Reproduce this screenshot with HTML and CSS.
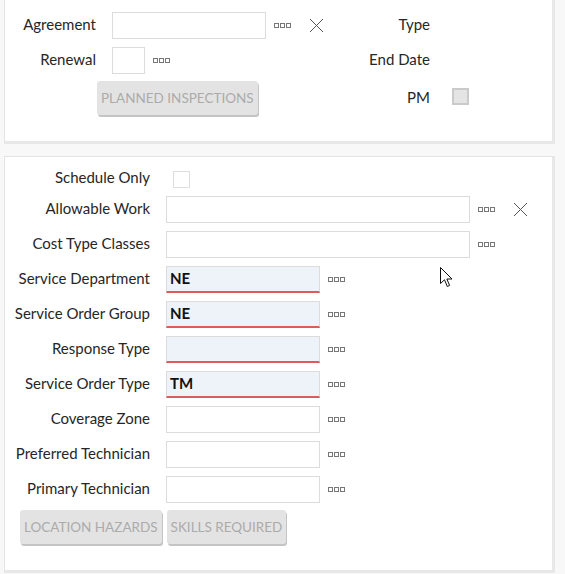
FILE: index.html
```html
<!DOCTYPE html>
<html>
<head>
<meta charset="utf-8">
<link rel="stylesheet" href="styles.css">
</head>
<body>
<div class="page">
  <section class="panel panel-top">
    <div class="grid-top">
      <div class="lbl">Agreement</div>
      <div class="field">
        <div class="input w154"></div>
        <svg class="dots" width="17" height="5" viewBox="0 0 17 5"><rect x="0.5" y="0.5" width="4" height="4"/><rect x="6.5" y="0.5" width="4" height="4"/><rect x="12.5" y="0.5" width="4" height="4"/></svg>
        <svg class="clear" width="15" height="15" viewBox="0 0 15 15"><path d="M1 1L14 14M14 1L1 14"/></svg>
      </div>
      <div class="lbl2">Type</div>
      <div class="val2"></div>

      <div class="lbl">Renewal</div>
      <div class="field">
        <div class="input w33"></div>
        <svg class="dots" width="17" height="5" viewBox="0 0 17 5"><rect x="0.5" y="0.5" width="4" height="4"/><rect x="6.5" y="0.5" width="4" height="4"/><rect x="12.5" y="0.5" width="4" height="4"/></svg>
      </div>
      <div class="lbl2">End Date</div>
      <div class="val2"></div>

      <div class="btn-cell"><button class="btn">PLANNED INSPECTIONS</button></div>
      <div class="lbl2 pm">PM</div>
      <div class="val2 pm-val"><span class="check disabled"></span></div>
    </div>
  </section>

  <section class="panel panel-main">
    <div class="grid-main">
      <div class="lbl first">Schedule Only</div>
      <div class="field check-field"><span class="check"></span></div>

      <div class="lbl">Allowable Work</div>
      <div class="field">
        <div class="input w304"></div>
        <svg class="dots" width="17" height="5" viewBox="0 0 17 5"><rect x="0.5" y="0.5" width="4" height="4"/><rect x="6.5" y="0.5" width="4" height="4"/><rect x="12.5" y="0.5" width="4" height="4"/></svg>
        <svg class="clear" width="15" height="15" viewBox="0 0 15 15"><path d="M1 1L14 14M14 1L1 14"/></svg>
      </div>

      <div class="lbl">Cost Type Classes</div>
      <div class="field">
        <div class="input w304"></div>
        <svg class="dots" width="17" height="5" viewBox="0 0 17 5"><rect x="0.5" y="0.5" width="4" height="4"/><rect x="6.5" y="0.5" width="4" height="4"/><rect x="12.5" y="0.5" width="4" height="4"/></svg>
      </div>

      <div class="lbl">Service Department</div>
      <div class="field">
        <div class="input w154 required">NE</div>
        <svg class="dots" width="17" height="5" viewBox="0 0 17 5"><rect x="0.5" y="0.5" width="4" height="4"/><rect x="6.5" y="0.5" width="4" height="4"/><rect x="12.5" y="0.5" width="4" height="4"/></svg>
      </div>

      <div class="lbl">Service Order Group</div>
      <div class="field">
        <div class="input w154 required">NE</div>
        <svg class="dots" width="17" height="5" viewBox="0 0 17 5"><rect x="0.5" y="0.5" width="4" height="4"/><rect x="6.5" y="0.5" width="4" height="4"/><rect x="12.5" y="0.5" width="4" height="4"/></svg>
      </div>

      <div class="lbl">Response Type</div>
      <div class="field">
        <div class="input w154 required"></div>
        <svg class="dots" width="17" height="5" viewBox="0 0 17 5"><rect x="0.5" y="0.5" width="4" height="4"/><rect x="6.5" y="0.5" width="4" height="4"/><rect x="12.5" y="0.5" width="4" height="4"/></svg>
      </div>

      <div class="lbl">Service Order Type</div>
      <div class="field">
        <div class="input w154 required">TM</div>
        <svg class="dots" width="17" height="5" viewBox="0 0 17 5"><rect x="0.5" y="0.5" width="4" height="4"/><rect x="6.5" y="0.5" width="4" height="4"/><rect x="12.5" y="0.5" width="4" height="4"/></svg>
      </div>

      <div class="lbl">Coverage Zone</div>
      <div class="field">
        <div class="input w154"></div>
        <svg class="dots" width="17" height="5" viewBox="0 0 17 5"><rect x="0.5" y="0.5" width="4" height="4"/><rect x="6.5" y="0.5" width="4" height="4"/><rect x="12.5" y="0.5" width="4" height="4"/></svg>
      </div>

      <div class="lbl">Preferred Technician</div>
      <div class="field">
        <div class="input w154"></div>
        <svg class="dots" width="17" height="5" viewBox="0 0 17 5"><rect x="0.5" y="0.5" width="4" height="4"/><rect x="6.5" y="0.5" width="4" height="4"/><rect x="12.5" y="0.5" width="4" height="4"/></svg>
      </div>

      <div class="lbl">Primary Technician</div>
      <div class="field">
        <div class="input w154"></div>
        <svg class="dots" width="17" height="5" viewBox="0 0 17 5"><rect x="0.5" y="0.5" width="4" height="4"/><rect x="6.5" y="0.5" width="4" height="4"/><rect x="12.5" y="0.5" width="4" height="4"/></svg>
      </div>

      <div class="btn-row">
        <button class="btn">LOCATION HAZARDS</button>
        <button class="btn">SKILLS REQUIRED</button>
      </div>
    </div>
  </section>

  <svg class="cursor" width="13" height="21" viewBox="0 0 13 21"><path d="M0.5 0.5L0.5 16.5L4.5 12.8L7.3 19.5L9.6 18.5L6.9 12L12 12Z"/></svg>
</div>
</body>
</html>
```

FILE: styles.css
```css
* { box-sizing: border-box; }
html, body { margin: 0; padding: 0; }
body {
  background: #f8f8f8;
  font-family: Lato, "Open Sans", sans-serif;
  font-size: 15px;
  color: #262626;
}
.page {
  position: relative;
  padding: 0 4px;
  width: 565px;
  height: 574px;
  overflow: hidden;
}
.panel {
  width: 551px;
  background: #fff;
  border: 1px solid #e4e4e4;
  border-right: 3px solid #e8e8e8;
  border-bottom: 3px solid #e8e8e8;
}
.panel-top {
  border-top: 0;
  padding: 12px 0 23px;
}
.panel-main {
  margin-top: 12px;
  padding: 10px 0 23px;
}
.grid-top {
  display: grid;
  grid-template-columns: 107px 218px 100px 1fr;
  grid-template-rows: 27px 27px 36px;
  row-gap: 8px;
  align-items: center;
}
.grid-main {
  display: grid;
  grid-template-columns: 161px 1fr;
  grid-template-rows: 21px repeat(9, 27px) 36px;
  row-gap: 8px;
  align-items: center;
}
.lbl {
  text-align: right;
  padding-right: 16px;
  padding-bottom: 3px;
  white-space: nowrap;
  line-height: 18px;
}
.lbl2 {
  text-align: right;
  white-space: nowrap;
  line-height: 18px;
  padding-bottom: 3px;
}
.lbl2.pm {
  align-self: start;
  margin-top: 6px;
}
.val2 {
  padding-left: 22px;
  display: flex;
  align-items: center;
}
.val2.pm-val {
  align-self: start;
  margin-top: 6px;
}
.field {
  display: flex;
  align-items: center;
  height: 27px;
}
.check-field {
  height: 21px;
  align-items: flex-end;
}
.lbl.first {
  align-self: end;
  padding-bottom: 0;
  margin-bottom: 2px;
}
.input {
  height: 27px;
  border: 1px solid #dcdcdc;
  background: #fff;
  font-weight: 700;
  color: #111;
  padding: 0 3px;
  line-height: 22px;
}
.w154 { width: 154px; }
.w33 { width: 33px; }
.w304 { width: 304px; }
.input.required {
  background: #eef2f9;
  border-bottom: 2px solid #e05a5a;
}
.dots {
  margin-left: 8px;
  fill: none;
  stroke: #777;
  stroke-width: 1;
  flex: none;
}
.clear {
  margin-left: 18px;
  fill: none;
  stroke: #555;
  stroke-width: 1;
  flex: none;
}
.check {
  display: inline-block;
  width: 17px;
  height: 17px;
  border: 1px solid #dedede;
  background: #fff;
  margin-left: 7px;
}
.check.disabled {
  margin-left: 0;
  border: 2px solid #cacaca;
  background: #e4e4e4;
}
.btn-cell {
  grid-column: 1 / 3;
  padding-left: 92px;
  align-self: start;
  margin-top: -1px;
}
.btn-row {
  grid-column: 1 / 3;
  display: flex;
  gap: 5px;
  padding-left: 15px;
  align-self: start;
  margin-top: -1px;
}
.btn {
  font-family: Lato, "Open Sans", sans-serif;
  font-size: 13.5px;
  color: #ababab;
  background: #e3e3e3;
  border: 0;
  border-radius: 3px;
  box-shadow: 1px 2px 0 #c4c4c4;
  height: 34px;
  padding: 0 4px;
  white-space: nowrap;
}
.cursor {
  position: absolute;
  left: 440px;
  top: 267px;
  fill: #fff;
  stroke: #111;
  stroke-width: 1;
}
```
